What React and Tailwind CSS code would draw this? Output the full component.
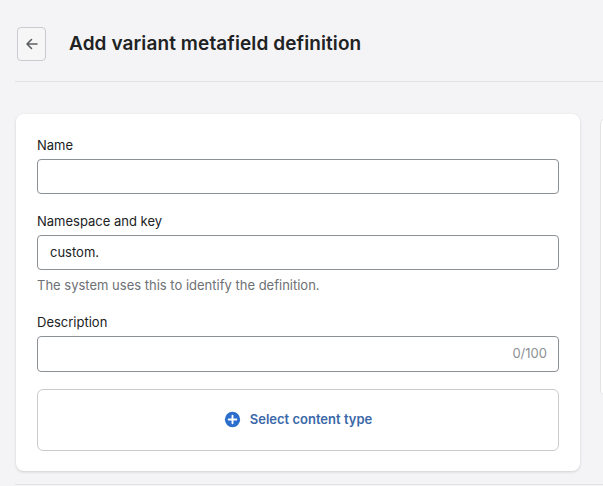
export default function App() {
  const font = { fontFamily: '"Segoe UI", Inter, "Noto Sans", sans-serif' };
  return (
    <div className="w-[603px] h-[486px] bg-[#f4f4f6] overflow-hidden relative text-[#202223]" style={font}>
      <div className="flex items-center gap-[23px] pl-[17px] pt-[27px] h-[61px]">
        <div className="w-[29px] h-[34px] border border-[#c9cccf] rounded-[4px] flex items-center justify-center bg-[#f6f6f7]">
          <svg width="16" height="16" viewBox="0 0 16 16" fill="none" stroke="#5c5f62" strokeWidth="1.6" strokeLinecap="round" strokeLinejoin="round"><path d="M13 8H3M7.5 3.5L3 8l4.5 4.5"/></svg>
        </div>
        <h1 className="text-[19px] font-semibold tracking-[0.1px]">Add variant metafield definition</h1>
      </div>
      <div className="ml-[15px] mt-[20px] h-px bg-[#e1e3e5]" />
      <div className="absolute left-[600px] top-[118px] w-[20px] h-[278px] bg-white rounded-md border border-[#e1e3e5]" />
      <div className="ml-[16px] mt-[32px] w-[564px] bg-white rounded-[8px] shadow-[0_1px_3px_rgba(0,0,0,0.15)] px-[21px] pt-[23px] pb-[20px]">
        <div className="text-[13px] leading-[16px] mb-[6px]">Name</div>
        <div className="h-[35px] border border-[#8c9196] rounded-[4px]" />
        <div className="text-[13px] leading-[16px] mt-[19px] mb-[6px]">Namespace and key</div>
        <div className="h-[35px] border border-[#8c9196] rounded-[4px] flex items-center px-[12px] text-[13px]">custom.</div>
        <div className="text-[13px] text-[#6d7175] mt-[6px]">The system uses this to identify the definition.</div>
        <div className="text-[13px] leading-[16px] mt-[18px] mb-[6px]">Description</div>
        <div className="h-[36px] border border-[#8c9196] rounded-[4px] flex items-center justify-end px-[11px] text-[13px] text-[#8c9196]">0/100</div>
        <div className="mt-[17px] h-[62px] border border-[#c9cccf] rounded-[6px] flex items-center justify-center gap-[9px]">
          <svg width="17" height="17" viewBox="0 0 20 20"><circle cx="10" cy="10" r="9" fill="#2c6ecb"/><path d="M10 5.5v9M5.5 10h9" stroke="white" strokeWidth="2.2" strokeLinecap="round"/></svg>
          <span className="text-[13px] font-semibold text-[#3a68a8]">Select content type</span>
        </div>
      </div>
      <div className="absolute left-[15px] top-[484px] w-[600px] h-px bg-[#e1e3e5]" />
    </div>
  );
}
